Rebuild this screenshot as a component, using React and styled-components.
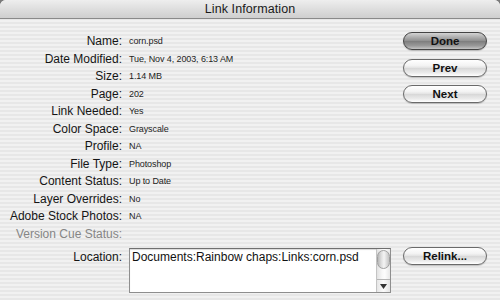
import React from "react";
import styled, { createGlobalStyle } from "styled-components";

const Global = createGlobalStyle`
  html, body { margin: 0; padding: 0; background: #7a7a7a; }
  body { width: 500px; height: 300px; overflow: hidden; font-family: "Liberation Sans", Arial, sans-serif; }
`;

const Window = styled.div`
  width: 500px;
  height: 300px;
  border-radius: 6px 6px 0 0;
  overflow: hidden;
  background: repeating-linear-gradient(
    to bottom,
    #f1f1f1 0px,
    #f1f1f1 2px,
    #e7e7e7 2px,
    #e7e7e7 4px
  );
  display: flex;
  flex-direction: column;
`;

const TitleBar = styled.div`
  height: 18px;
  border-bottom: 1px solid #8a8a8a;
  background: linear-gradient(to bottom, #eeeeee 0%, #dedede 50%, #cfcfcf 100%);
  display: flex;
  align-items: center;
  justify-content: center;
  font-size: 12.5px;
  color: #1a1a1a;
  letter-spacing: 0.1px;
`;

const Content = styled.div`
  display: grid;
  grid-template-columns: 122px 262px 84px;
  column-gap: 7px;
  padding-top: 14px;
`;

const InfoGrid = styled.div`
  display: grid;
  grid-template-columns: 122px 262px 84px;
  grid-template-rows: repeat(12, 17.5px);
  column-gap: 7px;
  grid-column: 1 / -1;
`;

const Label = styled.div`
  grid-column: 1;
  text-align: right;
  font-size: 12px;
  line-height: 17.5px;
  white-space: nowrap;
  color: ${(p) => (p.$disabled ? "#858585" : "#151515")};
`;

const Value = styled.div`
  grid-column: 2;
  font-size: 9px;
  letter-spacing: -0.1px;
  line-height: 17.5px;
  color: #1e1e1e;
  white-space: nowrap;
`;

const ButtonStack = styled.div`
  grid-column: 3;
  grid-row: 1 / span 6;
  display: flex;
  flex-direction: column;
  gap: 8px;
  margin-top: -1px;
  margin-left: 5px;
  width: 84px;
`;

const AquaButton = styled.button`
  height: 18px;
  width: 84px;
  padding: 0;
  border-radius: 9px;
  border: 1px solid ${(p) => (p.$default ? "#444" : "#6a6a6a")};
  font-family: "Liberation Sans", Arial, sans-serif;
  font-weight: bold;
  font-size: 11.5px;
  color: #111;
  box-shadow: 0 1px 1px rgba(0, 0, 0, 0.2);
  background: ${(p) =>
    p.$default
      ? "linear-gradient(to bottom, #d4d4d4 0%, #a9a9a9 30%, #8e8e8e 50%, #7e7e7e 52%, #9a9a9a 80%, #c4c4c4 100%)"
      : "linear-gradient(to bottom, #ffffff 0%, #f3f3f3 35%, #e2e2e2 50%, #d8d8d8 52%, #ebebeb 80%, #ffffff 100%)"};
  margin-bottom: ${(p) => (p.$default ? "1px" : "0")};
`;

const LocationRow = styled.div`
  grid-column: 1 / -1;
  display: grid;
  grid-template-columns: 122px 262px 84px;
  column-gap: 7px;
  margin-top: 5px;
  align-items: start;
`;

const LocationLabel = styled(Label)`
  line-height: 14px;
  padding-top: 2px;
`;

const TextBox = styled.div`
  position: relative;
  height: 45px;
  box-sizing: border-box;
  border: 1px solid #8e8e8e;
  border-top-color: #6f6f6f;
  background: #fff;
  box-shadow: inset 0 1px 1px rgba(0, 0, 0, 0.15);
  font-size: 12px;
  line-height: 14px;
  padding: 1px 16px 0 2px;
  color: #111;
  white-space: nowrap;
`;

const ScrollBar = styled.div`
  position: absolute;
  top: 0;
  right: 0;
  bottom: 0;
  width: 13px;
  border-left: 1px solid #c4c4c4;
  background: linear-gradient(to right, #e2e2e2, #f8f8f8 40%, #fdfdfd 60%, #e8e8e8);
  display: flex;
  flex-direction: column;
  justify-content: space-between;
`;

const Thumb = styled.div`
  margin: 1px 0 0 0;
  height: 19px;
  border-radius: 7px;
  border: 1px solid #a0a0a0;
  background: linear-gradient(to right, #b8b8b8 0%, #dedede 30%, #f4f4f4 55%, #c4c4c4 100%);
  box-sizing: border-box;
`;

const ArrowBtn = styled.div`
  height: 12px;
  border-top: 1px solid #b5b5b5;
  background: linear-gradient(to right, #e6e6e6, #fbfbfb 50%, #e4e4e4);
  display: flex;
  align-items: center;
  justify-content: center;
`;

const RelinkButton = styled(AquaButton)`
  grid-column: 3;
  margin-top: -1px;
  margin-left: 5px;
`;

const rows = [
  ["Name:", "corn.psd"],
  ["Date Modified:", "Tue, Nov 4, 2003, 6:13 AM"],
  ["Size:", "1.14 MB"],
  ["Page:", "202"],
  ["Link Needed:", "Yes"],
  ["Color Space:", "Grayscale"],
  ["Profile:", "NA"],
  ["File Type:", "Photoshop"],
  ["Content Status:", "Up to Date"],
  ["Layer Overrides:", "No"],
  ["Adobe Stock Photos:", "NA"],
  ["Version Cue Status:", "", true],
];

export default function App() {
  return (
    <>
      <Global />
      <Window>
        <TitleBar>Link Information</TitleBar>
        <Content>
          <InfoGrid>
            {rows.map(([l, v, dis], i) => (
              <React.Fragment key={l}>
                <Label $disabled={dis} style={{ gridRow: i + 1 }}>{l}</Label>
                <Value style={{ gridRow: i + 1 }}>{v}</Value>
              </React.Fragment>
            ))}
            <ButtonStack>
              <AquaButton $default>Done</AquaButton>
              <AquaButton>Prev</AquaButton>
              <AquaButton>Next</AquaButton>
            </ButtonStack>
          </InfoGrid>
          <LocationRow>
            <LocationLabel>Location:</LocationLabel>
            <TextBox>
              Documents:Rainbow chaps:Links:corn.psd
              <ScrollBar>
                <Thumb />
                <ArrowBtn>
                  <svg width="7" height="5" viewBox="0 0 7 5">
                    <path d="M0 0 L7 0 L3.5 5 Z" fill="#333" />
                  </svg>
                </ArrowBtn>
              </ScrollBar>
            </TextBox>
            <RelinkButton>Relink...</RelinkButton>
          </LocationRow>
        </Content>
      </Window>
    </>
  );
}
